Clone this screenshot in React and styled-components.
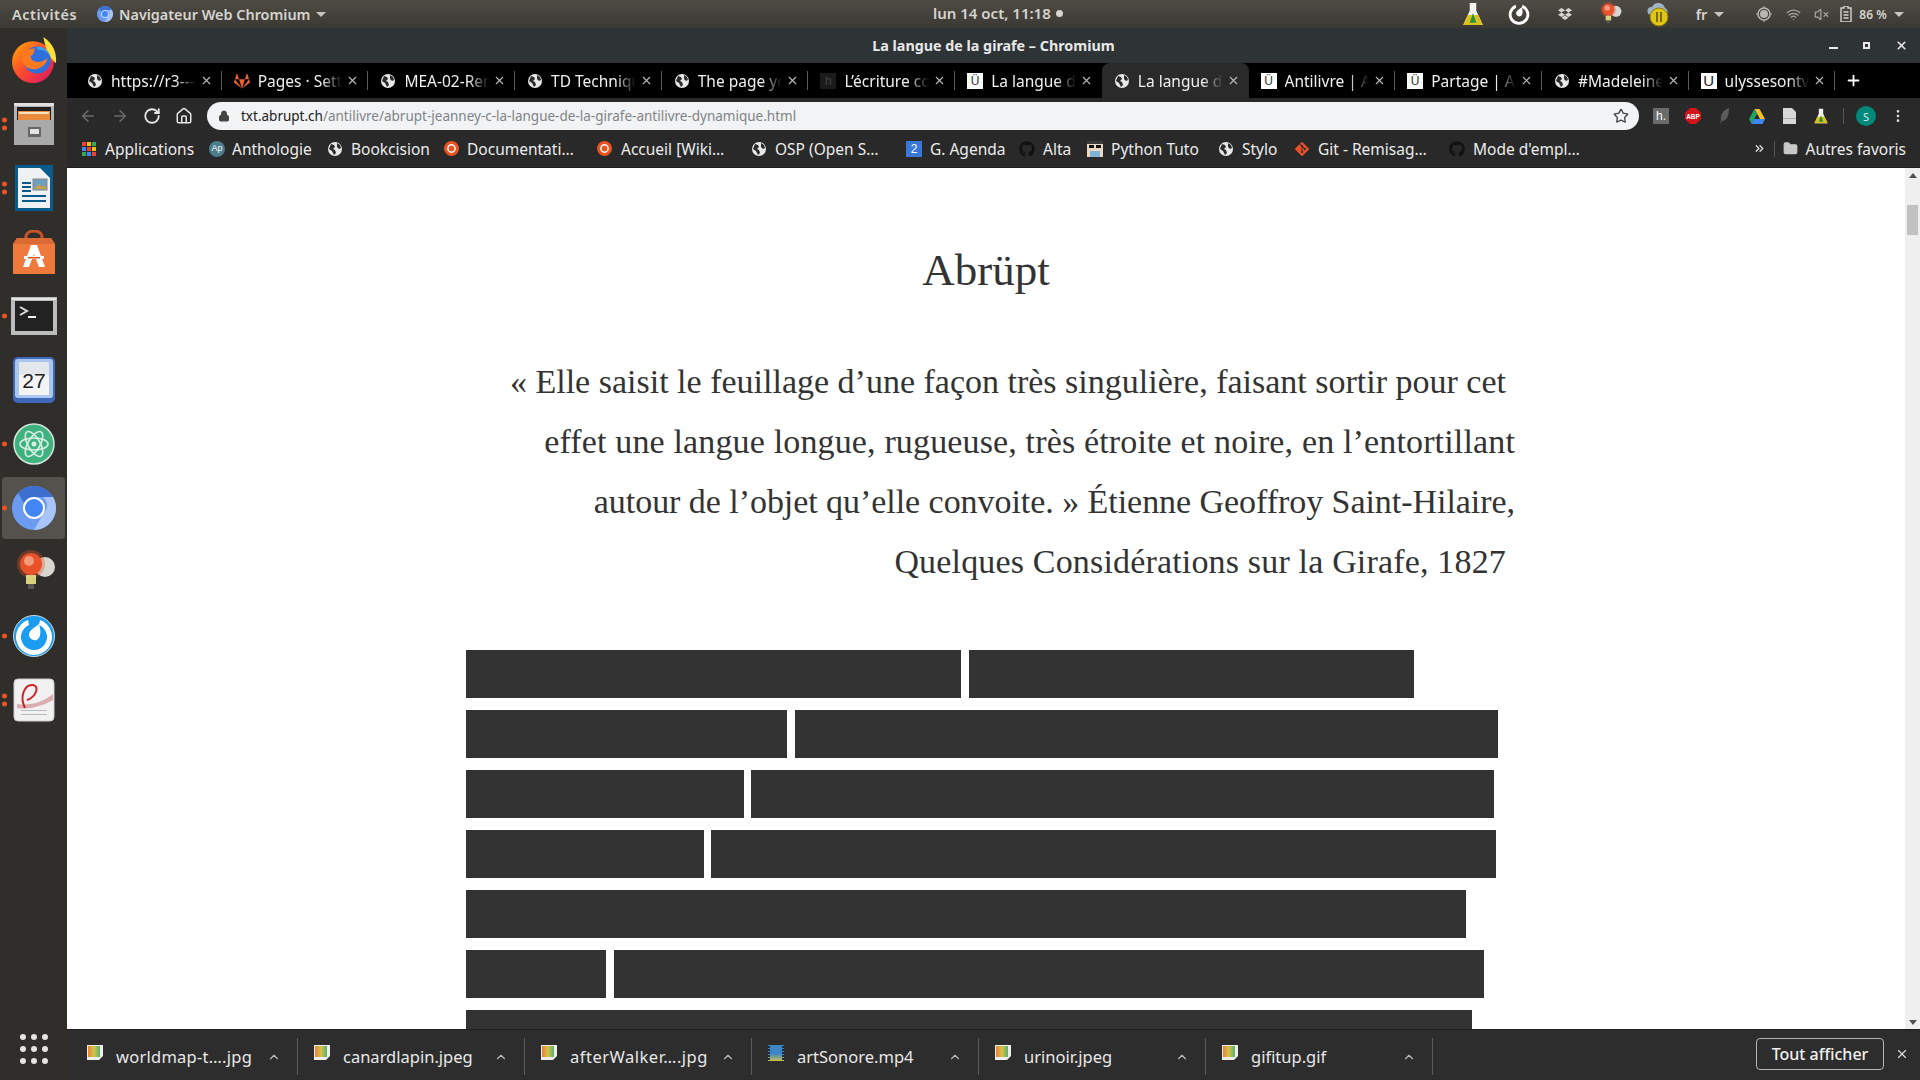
import styled, { createGlobalStyle } from "styled-components";
import { FaGithub, FaGitlab, FaDropbox, FaGitAlt } from "react-icons/fa";
import { X, ArrowLeft, ArrowRight, RotateCw, Home, Lock, Star, Plus, MoreVertical, Folder, ChevronUp, Wifi, VolumeX, ChevronsRight } from "lucide-react";

const GlobalStyle = createGlobalStyle`
  html, body { margin: 0; padding: 0; width: 1920px; height: 1080px; overflow: hidden; background: #fff; }
  * { box-sizing: border-box; }
`;

const Screen = styled.div`
  width: 1920px;
  height: 1080px;
  display: flex;
  flex-direction: column;
  font-family: "Noto Sans", "Open Sans", sans-serif;
`;

/* gnome top bar */
const TopBar = styled.header`
  height: 28px;
  flex: none;
  display: grid;
  grid-template-columns: 1fr 1fr;
  background: linear-gradient(#4f4b45, #3b3934);
  color: #d6d4cf;
  font-size: 14.4px;
  font-weight: 600;
  position: relative;
`;
const TopLeft = styled.div`
  display: flex;
  align-items: center;
  padding-left: 12px;
  gap: 20px;
`;
const Activities = styled.span`
  letter-spacing: 0.55px;
`;
const AppName = styled.div`
  display: flex;
  align-items: center;
  gap: 6px;
`;
const Clock = styled.div`
  position: absolute;
  left: 933px;
  top: 3px;
  font-size: 15px;
  display: flex;
  align-items: center;
  gap: 5px;
`;
const Dot = styled.span`
  width: 7px;
  height: 7px;
  border-radius: 50%;
  background: #d6d4cf;
`;
const Caret = styled.span`
  width: 0;
  height: 0;
  border: 5px solid transparent;
  border-top: 5px solid #c8c6c1;
  border-bottom: 0;
  display: inline-block;
`;
const Tray = styled.div`
  display: flex;
  align-items: center;
  justify-content: flex-end;
  padding-right: 16px;
`;
const TrayItem = styled.span`
  width: ${(p) => p.$w}px;
  padding-right: ${(p) => p.$pr || 0}px;
  flex: none;
  display: flex;
  align-items: center;
  justify-content: center;
  gap: 7px;
`;
const Small = styled.span`
  font-size: 12px;
  white-space: nowrap;
`;

const Body = styled.div`
  flex: 1;
  display: flex;
  min-height: 0;
`;

/* launcher */
const Dock = styled.nav`
  width: 67px;
  flex: none;
  background: #302e2b;
  display: flex;
  flex-direction: column;
`;
const DockSlot = styled.div`
  height: 64px;
  padding: 1px 0;
  flex: none;
  display: flex;
  align-items: center;
  justify-content: center;
  position: relative;
  margin: 0 2px;
  border-radius: 4px;
  background: ${(p) => (p.$active ? "#55524e" : "transparent")};
  background-clip: content-box;
`;
const Pips = styled.div`
  position: absolute;
  left: 0;
  top: 50%;
  transform: translateY(-50%);
  display: flex;
  flex-direction: column;
  gap: 3px;
`;
const Pip = styled.span`
  width: 5px;
  height: 5px;
  border-radius: 50%;
  background: #e95420;
`;
const DockGrid = styled.div`
  margin-top: auto;
  height: 51px;
  padding-bottom: 12px;
  display: grid;
  grid-template-columns: repeat(3, 6px);
  justify-content: center;
  align-content: center;
  column-gap: 5px;
  row-gap: 6px;
`;
const GridDot = styled.span`
  width: 6px;
  height: 6px;
  border-radius: 50%;
  background: #e6e5e2;
`;

const Browser = styled.div`
  flex: 1;
  min-width: 0;
  display: flex;
  flex-direction: column;
`;
const TitleBar = styled.div`
  height: 35px;
  flex: none;
  background: #2e3436;
  color: #e8e9e8;
  font-size: 14.3px;
  font-weight: 700;
  display: flex;
  align-items: center;
  justify-content: center;
  position: relative;
`;
const WindowButtons = styled.div`
  position: absolute;
  right: 12px;
  top: 0;
  height: 35px;
  display: flex;
  align-items: center;
  gap: 25px;
`;
const MinBtn = styled.span`
  width: 9px;
  height: 2px;
  background: #e8e9e8;
  margin-top: 5px;
`;
const MaxBtn = styled.span`
  width: 7px;
  height: 7px;
  border: 2px solid #e8e9e8;
`;

const TabStrip = styled.div`
  height: 35px;
  flex: none;
  background: #000;
  display: flex;
  align-items: stretch;
  padding-left: 8px;
`;
const Tab = styled.div`
  width: 146.7px;
  flex: none;
  display: flex;
  align-items: center;
  padding: 0 9px 0 12px;
  gap: 8px;
  color: #f0f0f0;
  font-size: 15.5px;
  position: relative;
  background: ${(p) => (p.$active ? "#2a2a2a" : "transparent")};
  border-radius: ${(p) => (p.$active ? "8px 8px 0 0" : "0")};
  &::after {
    content: "";
    display: ${(p) => (p.$sep ? "block" : "none")};
    position: absolute;
    right: 0;
    top: 8px;
    bottom: 8px;
    width: 1px;
    background: #5a5a5a;
  }
`;
const TabIcon = styled.span`
  width: 16px;
  flex: none;
  display: flex;
  align-items: center;
  justify-content: center;
`;
const TabLabel = styled.span`
  flex: 1;
  min-width: 0;
  margin-right: -4px;
  overflow: hidden;
  white-space: nowrap;
  -webkit-mask-image: linear-gradient(90deg, #000 76%, transparent);
  mask-image: linear-gradient(90deg, #000 76%, transparent);
`;
const NewTab = styled.div`
  width: 36px;
  display: flex;
  align-items: center;
  justify-content: center;
  color: #fff;
`;
const Favicon = styled.span`
  width: ${(p) => p.$size || 16}px;
  height: ${(p) => p.$size || 16}px;
  flex: none;
  display: flex;
  align-items: center;
  justify-content: center;
  background: ${(p) => p.$bg || "transparent"};
  color: ${(p) => p.$fg || "#eee"};
  border-radius: ${(p) => (p.$round ? "50%" : "0")};
  font-size: ${(p) => p.$font || 12}px;
  line-height: 1;
  font-family: "Liberation Sans", sans-serif;
`;

const Toolbar = styled.div`
  height: 34px;
  flex: none;
  background: #292929;
  display: flex;
  align-items: center;
  padding: 2px 0 0 12px;
`;
const NavIcons = styled.div`
  width: 128px;
  flex: none;
  display: flex;
  align-items: center;
  gap: 14px;
`;
const UrlBar = styled.div`
  width: 1432px;
  height: 28px;
  border-radius: 14px;
  flex: none;
  background: #f1f3f4;
  display: flex;
  align-items: center;
  padding: 0 10px 0 11px;
  font-size: 13.5px;
  color: #808488;
  gap: 11px;
`;
const Domain = styled.span`
  color: #222;
`;
const UrlText = styled.div`
  flex: 1;
  white-space: nowrap;
`;
const Extensions = styled.div`
  flex: 1;
  display: flex;
  align-items: center;
  padding-left: 6px;
`;
const ExtSlot = styled.span`
  width: 32px;
  flex: none;
  display: flex;
  align-items: center;
  justify-content: center;
`;
const Avatar = styled.span`
  width: 20px;
  height: 20px;
  border-radius: 50%;
  background: #00897b;
  color: #d8f0ec;
  font-size: 11px;
  display: flex;
  align-items: center;
  justify-content: center;
`;
const VRule = styled.span`
  width: 1px;
  height: 16px;
  margin: 0 ${(p) => p.$mx || 0}px;
  background: #555;
  flex: none;
`;

const Bookmarks = styled.div`
  height: 36px;
  flex: none;
  background: #292929;
  border-bottom: 1px solid #1d1d1d;
  display: flex;
  align-items: center;
  padding: 0 0 2px 15px;
  position: relative;
  color: #ececec;
  font-size: 15.5px;
`;
const Bookmark = styled.div`
  width: ${(p) => p.$w}px;
  flex: none;
  display: flex;
  align-items: center;
  gap: ${(p) => p.$gap || 9}px;
  white-space: nowrap;
`;
const OtherBookmarks = styled.div`
  position: absolute;
  right: 14px;
  top: 0;
  height: 33px;
  display: flex;
  align-items: center;
  gap: 8px;
`;

/* page */
const Page = styled.div`
  flex: 1;
  min-height: 0;
  display: flex;
  background: #fff;
  overflow: hidden;
`;
const Article = styled.main`
  flex: 1;
  min-width: 0;
  color: #333;
  font-family: "Liberation Serif", serif;
  overflow: hidden;
`;
const Title = styled.h1`
  margin: 0;
  padding-top: 78px;
  height: 184px;
  font-weight: 400;
  font-size: 45px;
  line-height: 48px;
  text-align: center;
`;
const Epigraph = styled.blockquote`
  margin: 0;
  width: 1448px;
  text-align: right;
  font-size: 34px;
  line-height: 60px;
`;
const EpigraphLine = styled.div`
  white-space: nowrap;
  padding-right: ${(p) => p.$pad || 0}px;
  letter-spacing: ${(p) => p.$ls || 0}px;
`;
const Redacted = styled.div`
  margin-top: 58px;
  padding-left: 399px;
  display: flex;
  flex-direction: column;
  gap: 12px;
`;
const RedactedRow = styled.div`
  display: flex;
  gap: ${(p) => p.$gap}px;
  height: 48px;
  flex: none;
`;
const Bar = styled.span`
  display: block;
  height: 48px;
  width: ${(p) => p.$w}px;
  background: #333;
`;
const Scrollbar = styled.div`
  width: 15px;
  flex: none;
  background: #efefef;
  position: relative;
`;
const ScrollArrow = styled.span`
  position: absolute;
  left: 4px;
  ${(p) => (p.$down ? "bottom: 4px;" : "top: 5px;")}
  width: 0;
  height: 0;
  border: 4px solid transparent;
  ${(p) => (p.$down ? "border-top: 5px solid #505050; border-bottom: 0;" : "border-bottom: 5px solid #505050; border-top: 0;")}
`;
const ScrollThumb = styled.span`
  position: absolute;
  left: 2px;
  top: 37px;
  width: 11px;
  height: 30px;
  background: #c1c1c1;
`;

/* downloads */
const Shelf = styled.footer`
  height: 51px;
  flex: none;
  background: #2d2d2d;
  border-top: 1px solid #1d1d1d;
  display: flex;
  align-items: center;
  color: #e8e8e8;
  font-size: 16.5px;
  padding-left: 4px;
  position: relative;
`;
const Download = styled.div`
  width: 227px;
  height: 37px;
  margin-top: 3px;
  flex: none;
  display: flex;
  align-items: center;
  padding: 0 16px;
  border-right: 1px solid #5d5d5d;
  gap: 13px;
`;
const DownloadName = styled.span`
  flex: 1;
  white-space: nowrap;
  letter-spacing: ${(p) => p.$ls || 0}px;
`;
const FileThumb = styled.span`
  width: 16px;
  height: 15px;
  margin-top: -8px;
  flex: none;
  display: flex;
`;
const ShowAllButton = styled.button`
  position: absolute;
  right: 36px;
  top: 8px;
  width: 128px;
  height: 32px;
  background: transparent;
  border: 1px solid #b5b5b5;
  border-radius: 4px;
  color: #f0f0f0;
  font: 500 16px "Noto Sans", sans-serif;
  padding: 0;
`;
const ShelfClose = styled.span`
  position: absolute;
  right: 11px;
  top: 17px;
  display: flex;
  color: #ddd;
`;

/* drawn logos */
const Firefox = () => (
  <svg width="46" height="46" viewBox="0 0 44 44">
    <defs>
      <linearGradient id="ff" x1="0" y1="0" x2="1" y2="1">
        <stop offset="0" stopColor="#ffb000" />
        <stop offset="0.45" stopColor="#ff4f2c" />
        <stop offset="1" stopColor="#d8116a" />
      </linearGradient>
    </defs>
    <circle cx="21" cy="24" r="20" fill="url(#ff)" />
    <path d="M31 0c9 6 13 15 12 25-6-4-10-13-12-25z" fill="#ffdf3a" />
    <circle cx="25" cy="22" r="13" fill="#2f6fdc" />
    <path d="M25 9c6 0 12 4 13 11-2-5-6-8-13-8z" fill="#3ea0f0" />
    <path d="M10 20c3-8 9-9 13-9l-2 6c-3 0-3 4 1 6 5 2 10 0 13-3-1 8-11 13-18 10-4-2-7-6-7-10z" fill="#ff7a1f" />
  </svg>
);
const Files = () => (
  <svg width="42" height="44" viewBox="0 0 42 44">
    <rect x="1" y="1" width="40" height="42" rx="2" fill="#b4b4b4" />
    <rect x="1" y="1" width="40" height="3" fill="#e0e0e0" />
    <rect x="4" y="5" width="34" height="13" fill="#1f1f1f" />
    <rect x="5" y="9" width="32" height="9" fill="#e98a3c" />
    <rect x="6" y="10" width="30" height="2" fill="#f6e1c4" />
    <rect x="1" y="18" width="40" height="25" fill="#a9a9a9" />
    <rect x="15" y="25" width="13" height="10" rx="1" fill="#666" />
    <rect x="17" y="27" width="9" height="5" fill="#e4e4e4" />
  </svg>
);
const Writer = () => (
  <svg width="42" height="48" viewBox="0 0 40 48">
    <path d="M1 1h38v46H1z" fill="#0b5a8c" />
    <path d="M4 4h22l10 10v30H4z" fill="#eef2f5" />
    <rect x="8" y="18" width="9" height="2" fill="#0b5a8c" />
    <rect x="8" y="22" width="9" height="2" fill="#0b5a8c" />
    <rect x="8" y="26" width="9" height="2" fill="#0b5a8c" />
    <rect x="8" y="31" width="24" height="2" fill="#0b5a8c" />
    <rect x="8" y="36" width="24" height="2" fill="#0b5a8c" />
    <rect x="19" y="15" width="14" height="11" fill="#6f9fc0" stroke="#8a8a8a" />
    <path d="M20 25l5-5 3 3 2-2 3 4z" fill="#c9a24a" />
  </svg>
);
const Store = () => (
  <svg width="44" height="44" viewBox="0 0 44 44">
    <path d="M14 11V7c0-8 16-8 16 0v4" fill="none" stroke="#c8552a" strokeWidth="3" />
    <path d="M5 8h34l4 6v30H1V14z" fill="#ef7a3c" />
    <path d="M1 14h42l-4-6H5z" fill="#dc6a34" />
    <path d="M19 15h6l8 22h-6l-5-13-5 13h-6z" fill="#fff" />
    <rect x="12" y="26" width="20" height="3" fill="#fff" />
    <rect x="16" y="27" width="12" height="1.5" fill="#d8552a" />
  </svg>
);
const Terminal = () => (
  <svg width="46" height="38" viewBox="0 0 46 38">
    <rect x="0" y="0" width="46" height="38" fill="#bcbcbc" />
    <rect x="1" y="1" width="44" height="2" fill="#e4e4e4" />
    <rect x="4" y="4" width="38" height="30" fill="#222" />
    <path d="M9 10l7 4-7 4" fill="none" stroke="#ddd" strokeWidth="2" />
    <rect x="17" y="19" width="8" height="2" fill="#eee" />
  </svg>
);
const CalendarApp = () => (
  <svg width="44" height="48" viewBox="0 0 44 48">
    <rect x="1" y="1" width="42" height="46" rx="5" fill="#3f69b8" />
    <rect x="3" y="3" width="38" height="39" rx="3" fill="#a9c6ef" />
    <rect x="7" y="6" width="30" height="33" fill="#f4f4f4" />
    <rect x="7" y="6" width="30" height="13" fill="#e3e6ea" />
    <text x="22" y="32" fontSize="21" textAnchor="middle" fontFamily="Liberation Sans" fill="#222">27</text>
  </svg>
);
const Atom = () => (
  <svg width="42" height="42" viewBox="0 0 42 42">
    <circle cx="21" cy="21" r="20" fill="#3fb27f" stroke="#d6e6dc" strokeWidth="1.5" />
    <g fill="none" stroke="#d7f0e3" strokeWidth="1.6">
      <ellipse cx="21" cy="21" rx="14" ry="6" />
      <ellipse cx="21" cy="21" rx="14" ry="6" transform="rotate(60 21 21)" />
      <ellipse cx="21" cy="21" rx="14" ry="6" transform="rotate(120 21 21)" />
    </g>
    <circle cx="21" cy="21" r="2.5" fill="#d7f0e3" />
  </svg>
);
const ChromiumLogo = ({ size = 44 }) => (
  <svg width={size} height={size} viewBox="0 0 44 44">
    <circle cx="22" cy="22" r="22" fill="#6c9cf0" />
    <path d="M22 0a22 22 0 0 1 19 11H22a11 11 0 0 0-10 6L6 7A22 22 0 0 1 22 0z" fill="#3d6fd0" />
    <path d="M41 11a22 22 0 0 1-19 33l9-16a11 11 0 0 0 0-17z" fill="#a8c4f8" />
    <circle cx="22" cy="22" r="10" fill="#4285f4" stroke="#fff" strokeWidth="2" />
  </svg>
);
const Bulb = ({ size = 44 }) => (
  <svg width={size} height={size} viewBox="0 0 44 44">
    <circle cx="33" cy="17" r="10" fill="#d8d6d0" />
    <circle cx="19" cy="14" r="14" fill="#e8512a" opacity="0.35" />
    <circle cx="19" cy="14" r="11" fill="#e8512a" />
    <circle cx="17" cy="11" r="5" fill="#f39a7c" />
    <rect x="14" y="25" width="10" height="9" fill="#d8d27e" />
    <rect x="16" y="34" width="6" height="5" fill="#555" />
  </svg>
);
const Mattermost = ({ size = 42, plain }) => (
  <svg width={size} height={size} viewBox="0 0 42 42">
    {!plain && <circle cx="21" cy="21" r="20.5" fill="#1a9cf0" stroke="#cfd5da" />}
    <path d="M27 5a18 18 0 1 1-12 0l1 5a13 13 0 1 0 10 0z" fill="#fff" />
    <path d="M26 9c2 7 2 12-1 15-3 3-9 0-9-4 0-5 5-7 10-11z" fill="#fff" />
  </svg>
);
const Reader = () => (
  <svg width="42" height="44" viewBox="0 0 42 44">
    <rect x="1" y="1" width="40" height="42" rx="4" fill="#f1f1f1" stroke="#ccc" />
    <path d="M4 26c14 2 26-2 36-10v6c-10 6-24 10-36 8z" fill="#d8aeb0" />
    <path d="M12 30C6 18 12 6 20 7c7 1 3 12-6 15" fill="none" stroke="#cc2229" strokeWidth="2" />
    <rect x="8" y="32" width="26" height="1" fill="#bbb" />
    <rect x="8" y="36" width="26" height="1" fill="#bbb" />
  </svg>
);
const Flask = ({ size = 24 }) => (
  <svg width={size} height={size} viewBox="0 0 22 22">
    <path d="M8 1h6v7l6 13H2L8 8z" fill="#f2f2ee" />
    <path d="M6 12h10l4 9H2z" fill="#d6c11f" />
    <path d="M11 10l3 9H8z" fill="#2f8f3b" />
  </svg>
);
const CloudPause = () => (
  <svg width="24" height="26" viewBox="0 0 24 26">
    <path d="M5 14a4 4 0 0 1 1-8 7 7 0 0 1 13 1 4 4 0 0 1 1 7z" fill="#9fb4c4" />
    <circle cx="13" cy="16" r="9" fill="#e2c414" stroke="#8a7a10" />
    <rect x="10" y="11" width="2" height="10" fill="#7a6a10" />
    <rect x="14" y="11" width="2" height="10" fill="#7a6a10" />
  </svg>
);
const TargetIcon = () => (
  <svg width="16" height="16" viewBox="0 0 16 16">
    <circle cx="8" cy="8" r="6" fill="none" stroke="#b8b6b0" strokeWidth="1.5" />
    <circle cx="8" cy="8" r="4" fill="#b8b6b0" />
    <path d="M8 0v2M8 14v2M0 8h2M14 8h2" stroke="#b8b6b0" />
  </svg>
);
const BatteryIcon = () => (
  <svg width="12" height="16" viewBox="0 0 12 16">
    <path d="M4 0h4v2h3v14H1V2h3z" fill="none" stroke="#d6d4cf" strokeWidth="1.4" />
    <path d="M3.5 6h5M3.5 9h5M3.5 12h5" stroke="#d6d4cf" strokeWidth="1.4" />
  </svg>
);
const AppsGrid = () => (
  <svg width="14" height="14" viewBox="0 0 14 14">
    {["#ea4335", "#fbbc05", "#34a853", "#4285f4", "#ea4335", "#fbbc05", "#34a853", "#4285f4", "#ea4335"].map((c, i) => (
      <rect key={i} x={(i % 3) * 5} y={Math.floor(i / 3) * 5} width="4" height="4" fill={c} />
    ))}
  </svg>
);
const Ubuntu = () => (
  <svg width="15" height="15" viewBox="0 0 14 14">
    <circle cx="7" cy="7" r="7" fill="#e95420" />
    <circle cx="7" cy="7" r="3.4" fill="none" stroke="#fff" strokeWidth="1.4" />
  </svg>
);
const SolidGlobe = () => (
  <svg width="14" height="14" viewBox="0 0 14 14">
    <circle cx="7" cy="7" r="7" fill="#e8e8e8" />
    <path d="M3 2l3 1 1 2-2 2 2 1 1 3-2 2-2-4-3-2zM9 1l3 2 1 3-2 1-2-2z" fill="#2b2b2b" />
  </svg>
);
const Sunglasses = () => (
  <svg width="16" height="16" viewBox="0 0 16 16">
    <rect width="16" height="16" fill="#e8d8c0" />
    <rect width="16" height="3" fill="#3a3a3a" />
    <rect x="2" y="4" width="5" height="3" fill="#111" />
    <rect x="9" y="4" width="5" height="3" fill="#111" />
    <rect x="3" y="10" width="10" height="6" fill="#7fb2d8" />
  </svg>
);
const Drive = () => (
  <svg width="16" height="15" viewBox="0 0 16 15">
    <path d="M5.5 0h5L16 10h-5z" fill="#f6c02c" />
    <path d="M5.5 0L0 10l2.5 5L8 5z" fill="#1fa463" />
    <path d="M5 10h11l-2.5 5h-11z" fill="#4285f4" />
  </svg>
);
const Feather = () => (
  <svg width="10" height="16" viewBox="0 0 10 16">
    <path d="M9 0C3 2 0 7 1 12l-1 4 2-3c5 0 7-6 7-13z" fill="#5c5c5c" />
  </svg>
);
const Abp = () => (
  <svg width="16" height="16" viewBox="0 0 16 16">
    <path d="M5 0h6l5 5v6l-5 5H5l-5-5V5z" fill="#d3121b" />
    <text x="8" y="10.5" fontSize="6.5" fontWeight="700" textAnchor="middle" fontFamily="Liberation Sans" fill="#fff">ABP</text>
  </svg>
);
const PageDoc = () => (
  <svg width="13" height="16" viewBox="0 0 13 16">
    <path d="M0 0h9l4 4v12H0z" fill="#d8d8d8" />
    <rect y="10" width="13" height="1" fill="#aaa" />
  </svg>
);
const ImageThumb = () => (
  <svg width="16" height="15" viewBox="0 0 16 15">
    <defs>
      <linearGradient id="thumb" x1="0" y1="0" x2="1" y2="0">
        <stop offset="0" stopColor="#e8813c" />
        <stop offset="0.5" stopColor="#d6c24a" />
        <stop offset="1" stopColor="#57b06a" />
      </linearGradient>
    </defs>
    <path d="M0 0h16v11l-4 4H0z" fill="#eee" />
    <rect x="1" y="1" width="12" height="11" fill="url(#thumb)" />
  </svg>
);
const VideoThumb = () => (
  <svg width="16" height="16" viewBox="0 0 16 16">
    <defs>
      <linearGradient id="film" x1="0" y1="0" x2="0" y2="1">
        <stop offset="0.55" stopColor="#3d86c6" />
        <stop offset="1" stopColor="#c9c24c" />
      </linearGradient>
    </defs>
    <rect width="16" height="16" fill="url(#film)" />
    <path d="M1 1v14M15 1v14" stroke="#1f2a33" strokeWidth="2" strokeDasharray="2 1" />
  </svg>
);

const dock = [
  { icon: <Firefox />, pips: 0 },
  { icon: <Files />, pips: 2 },
  { icon: <Writer />, pips: 2 },
  { icon: <Store />, pips: 0 },
  { icon: <Terminal />, pips: 1 },
  { icon: <CalendarApp />, pips: 0 },
  { icon: <Atom />, pips: 1 },
  { icon: <ChromiumLogo />, pips: 1, active: true },
  { icon: <Bulb />, pips: 0 },
  { icon: <Mattermost />, pips: 1 },
  { icon: <Reader />, pips: 2 },
];

const abruptIcon = <Favicon $bg="#fff" $fg="#333">Ü</Favicon>;
const tabs = [
  { label: "https://r3---sn-", icon: <SolidGlobe />, sep: true },
  { label: "Pages · Settings", icon: <FaGitlab color="#e8602c" size={16} />, sep: true },
  { label: "MEA-02-Remise", icon: <SolidGlobe />, sep: true },
  { label: "TD Technique", icon: <SolidGlobe />, sep: true },
  { label: "The page you", icon: <SolidGlobe />, sep: true },
  { label: "L’écriture code", icon: <Favicon $bg="#1b1b1b" $fg="#444">h</Favicon>, sep: true },
  { label: "La langue de", icon: abruptIcon },
  { label: "La langue de", icon: <SolidGlobe />, active: true },
  { label: "Antilivre | Abrüpt", icon: abruptIcon, sep: true },
  { label: "Partage | Abrüpt", icon: abruptIcon, sep: true },
  { label: "#Madeleine", icon: <SolidGlobe />, sep: true },
  { label: "ulyssesontv", icon: <Favicon $bg="#fff" $fg="#222" $font={15}>U</Favicon>, sep: true },
];

const bookmarks = [
  { label: "Applications", icon: <AppsGrid />, w: 127 },
  { label: "Anthologie", icon: <Favicon $bg="#4a7c8a" $fg="#fff" $round $font={9}>Ap</Favicon>, w: 119, gap: 7 },
  { label: "Bookcision", icon: <SolidGlobe />, w: 116 },
  { label: "Documentati…", icon: <Ubuntu />, w: 153, gap: 8 },
  { label: "Accueil [Wiki…", icon: <Ubuntu />, w: 155 },
  { label: "OSP (Open S…", icon: <SolidGlobe />, w: 154 },
  { label: "G. Agenda", icon: <Favicon $bg="#3a78d8" $fg="#fff">2</Favicon>, w: 113, gap: 8 },
  { label: "Alta", icon: <FaGithub color="#111" size={16} />, w: 68, gap: 8 },
  { label: "Python Tuto", icon: <Sunglasses />, w: 132, gap: 8 },
  { label: "Stylo", icon: <SolidGlobe />, w: 75 },
  { label: "Git - Remisag…", icon: <FaGitAlt color="#e8502c" size={16} />, w: 155, gap: 8 },
  { label: "Mode d'empl…", icon: <FaGithub color="#111" size={16} />, gap: 8 },
];

const epigraph = [
  { text: "« Elle saisit le feuillage d’une façon très singulière, faisant sortir pour cet", pad: 9 },
  { text: "effet une langue longue, rugueuse, très étroite et noire, en l’entortillant", ls: 0.15 },
  { text: "autour de l’objet qu’elle convoite. » Étienne Geoffroy Saint-Hilaire,", ls: -0.05 },
  { text: "Quelques Considérations sur la Girafe, 1827", pad: 9, ls: 0.17 },
];

const rows = [
  { gap: 8, bars: [495, 445] },
  { gap: 8, bars: [321, 703] },
  { gap: 7, bars: [278, 743] },
  { gap: 7, bars: [238, 785] },
  { gap: 7, bars: [1000] },
  { gap: 8, bars: [140, 870] },
  { gap: 7, bars: [1006] },
];

const downloads = [
  { name: "worldmap-t….jpg", ls: 0.25 },
  { name: "canardlapin.jpeg" },
  { name: "afterWalker….jpg", ls: 0.5 },
  { name: "artSonore.mp4", video: true },
  { name: "urinoir.jpeg" },
  { name: "gifitup.gif" },
];

export default function App() {
  return (
    <Screen>
      <GlobalStyle />
      <TopBar>
        <TopLeft>
          <Activities>Activités</Activities>
          <AppName>
            <ChromiumLogo size={16} />
            Navigateur Web Chromium
            <Caret />
          </AppName>
        </TopLeft>
        <Clock>
          lun 14 oct, 11:18 <Dot />
        </Clock>
        <Tray>
          <TrayItem $w={46}><Flask /></TrayItem>
          <TrayItem $w={46}><Mattermost size={24} plain /></TrayItem>
          <TrayItem $w={46}><FaDropbox size={14} /></TrayItem>
          <TrayItem $w={44}><Bulb size={24} /></TrayItem>
          <TrayItem $w={52}><CloudPause /></TrayItem>
          <TrayItem $w={60} $pr={8}>fr <Caret /></TrayItem>
          <TrayItem $w={40}><TargetIcon /></TrayItem>
          <TrayItem $w={18}><Wifi size={15} color="#a8a6a0" /></TrayItem>
          <TrayItem $w={38}><VolumeX size={15} color="#a8a6a0" /></TrayItem>
          <TrayItem $w={64}><BatteryIcon /><Small>86 %</Small><Caret /></TrayItem>
        </Tray>
      </TopBar>
      <Body>
        <Dock>
          {dock.map((d, i) => (
            <DockSlot key={i} $active={d.active}>
              {d.pips > 0 && (
                <Pips>
                  {Array.from({ length: d.pips }).map((_, j) => <Pip key={j} />)}
                </Pips>
              )}
              {d.icon}
            </DockSlot>
          ))}
          <DockGrid>
            {Array.from({ length: 9 }).map((_, i) => <GridDot key={i} />)}
          </DockGrid>
        </Dock>
        <Browser>
          <TitleBar>
            La langue de la girafe – Chromium
            <WindowButtons>
              <MinBtn />
              <MaxBtn />
              <X size={13} strokeWidth={3} />
            </WindowButtons>
          </TitleBar>
          <TabStrip>
            {tabs.map((t, i) => (
              <Tab key={i} $active={t.active} $sep={t.sep}>
                <TabIcon>{t.icon}</TabIcon>
                <TabLabel>{t.label}</TabLabel>
                <X size={13} color="#bbb" />
              </Tab>
            ))}
            <NewTab><Plus size={17} strokeWidth={2.5} /></NewTab>
          </TabStrip>
          <Toolbar>
            <NavIcons>
              <ArrowLeft size={18} color="#6c6c6c" />
              <ArrowRight size={18} color="#6c6c6c" />
              <RotateCw size={18} color="#e6e6e6" strokeWidth={2.4} />
              <Home size={18} color="#e6e6e6" />
            </NavIcons>
            <UrlBar>
              <Lock size={12} color="#444" fill="#444" />
              <UrlText>
                <Domain>txt.abrupt.ch</Domain>/antilivre/abrupt-jeanney-c-la-langue-de-la-girafe-antilivre-dynamique.html
              </UrlText>
              <Star size={16} color="#444" />
            </UrlBar>
            <Extensions>
              <ExtSlot><Favicon $bg="#6b6b6b" $fg="#fff" $font={12}>h.</Favicon></ExtSlot>
              <ExtSlot><Abp /></ExtSlot>
              <ExtSlot><Feather /></ExtSlot>
              <ExtSlot><Drive /></ExtSlot>
              <ExtSlot><PageDoc /></ExtSlot>
              <ExtSlot><Flask size={16} /></ExtSlot>
              <VRule $mx={6} />
              <ExtSlot><Avatar>S</Avatar></ExtSlot>
              <ExtSlot><MoreVertical size={16} color="#ddd" /></ExtSlot>
            </Extensions>
          </Toolbar>
          <Bookmarks>
            {bookmarks.map((b, i) => (
              <Bookmark key={i} $w={b.w} $gap={b.gap}>
                {b.icon}
                {b.label}
              </Bookmark>
            ))}
            <OtherBookmarks>
              <ChevronsRight size={13} color="#ddd" strokeWidth={2.5} />
              <VRule />
              <Folder size={15} color="#c8c8c8" fill="#c8c8c8" />
              Autres favoris
            </OtherBookmarks>
          </Bookmarks>
          <Page>
            <Article>
              <Title>Abrüpt</Title>
              <Epigraph>
                {epigraph.map((l) => (
                  <EpigraphLine key={l.text} $pad={l.pad} $ls={l.ls}>{l.text}</EpigraphLine>
                ))}
              </Epigraph>
              <Redacted>
                {rows.map((r, i) => (
                  <RedactedRow key={i} $gap={r.gap}>
                    {r.bars.map((w, j) => <Bar key={j} $w={w} />)}
                  </RedactedRow>
                ))}
              </Redacted>
            </Article>
            <Scrollbar>
              <ScrollArrow />
              <ScrollThumb />
              <ScrollArrow $down />
            </Scrollbar>
          </Page>
          <Shelf>
            {downloads.map((d) => (
              <Download key={d.name}>
                <FileThumb>{d.video ? <VideoThumb /> : <ImageThumb />}</FileThumb>
                <DownloadName $ls={d.ls}>{d.name}</DownloadName>
                <ChevronUp size={14} color="#bbb" />
              </Download>
            ))}
            <ShowAllButton>Tout afficher</ShowAllButton>
            <ShelfClose><X size={14} /></ShelfClose>
          </Shelf>
        </Browser>
      </Body>
    </Screen>
  );
}
